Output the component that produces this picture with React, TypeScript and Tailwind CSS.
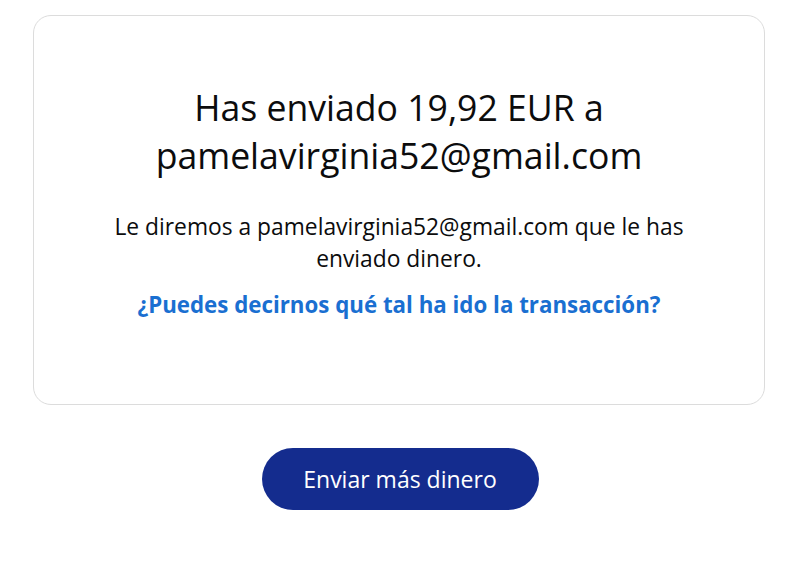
import React from "react";

export default function App() {
  return (
    <div className="w-[800px] h-[585px] bg-white font-['Open_Sans','Liberation_Sans',sans-serif] text-[#0c0c0d]">
      <div className="pl-[33px] pr-[35px] pt-[15px]">
        <div className="h-[390px] rounded-[18px] border border-[#dcdcdc] flex flex-col items-center pt-[67px] px-[50px] text-center">
          <h1 className="text-[35.6px] leading-[48px]">
            Has enviado 19,92 EUR a pamelavirginia52@gmail.com
          </h1>
          <p className="mt-[32px] max-w-[600px] text-[22.8px] leading-[32px]">
            Le diremos a pamelavirginia52@gmail.com que le has enviado dinero.
          </p>
          <a href="#" className="mt-[14px] text-[22.3px] leading-[32px] font-bold text-[#1a6fd1]">
            ¿Puedes decirnos qué tal ha ido la transacción?
          </a>
        </div>
      </div>
      <div className="flex justify-center pt-[43px]">
        <button className="h-[62px] w-[277px] rounded-full bg-[#142c8e] text-white text-[23px] font-medium">
          Enviar más dinero
        </button>
      </div>
    </div>
  );
}
